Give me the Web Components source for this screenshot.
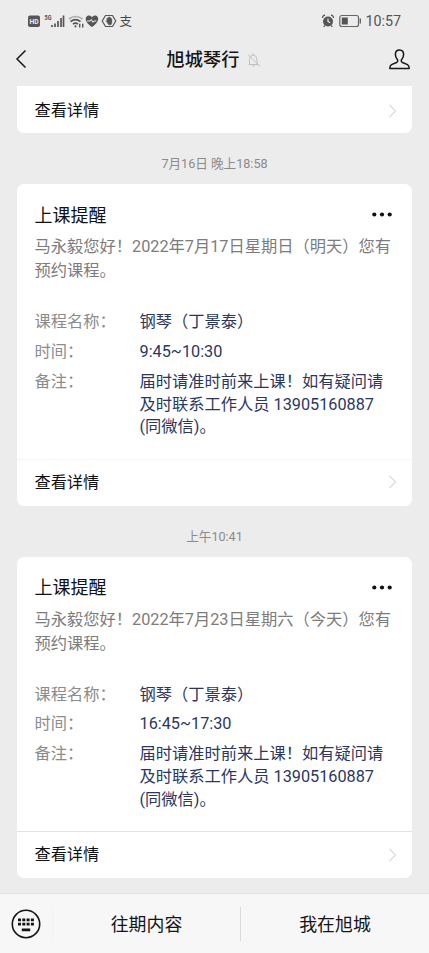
<!DOCTYPE html>
<html lang="zh-CN">
<head>
<meta charset="utf-8">
<title>旭城琴行</title>
<style>
html,body{margin:0;padding:0}
body{width:429px;height:953px;overflow:hidden;background:#ececec;font-family:Roboto,"Noto Sans CJK SC",sans-serif;text-spacing-trim:space-all}
</style>
</head>
<body>
<chat-screen></chat-screen>
<script>
const define=(name,html)=>{
  const t=document.createElement('template');
  t.innerHTML=html;
  customElements.define(name,class extends HTMLElement{
    constructor(){super();this.attachShadow({mode:'open'}).append(t.content.cloneNode(true));}
  });
};

define('status-bar',`
<style>
:host{display:flex;justify-content:space-between;align-items:center;height:41px;padding:0 28px 0 28px;box-sizing:border-box;color:#555}
svg{display:block}
.r{display:flex;align-items:center;font-size:14.3px;line-height:20px;color:#555;gap:4px}
.r span{margin-top:1px}
</style>
<svg width="106" height="20" viewBox="0 0 106 20" fill="none" stroke="#555">
  <rect x="0" y="4.500" width="12" height="11.500" rx="2" fill="#555" stroke="none"/>
  <text x="1.4" y="13.2" font-family="Roboto" font-size="8" font-weight="700" textLength="9.2" lengthAdjust="spacingAndGlyphs" fill="#ececec" stroke="none">HD</text>
  <text x="16.500" y="9" font-family="Roboto" font-size="7.400" font-weight="700" textLength="7" lengthAdjust="spacingAndGlyphs" fill="#555" stroke="none">5G</text>
  <path d="M24 14V16M27 12.500V16M30 10V16M33 7V16M35.5 4.500V16" stroke-width="1.7"/>
  <path d="M41 8q6.500-5 13.500 0" stroke="#aaa" stroke-width="1.600"/>
  <path d="M42.500 10.700q5-4 10 0M45 13.200q2.500-2 5 0" stroke-width="1.700"/>
  <circle cx="47.500" cy="15.300" r="1.100" fill="#555" stroke="none"/>
  <path d="M51.700 12.800v3.700M54.700 16.500v-3.700" stroke-width="1.400"/>
  <path d="M64 16c-9-6-6.500-11.500-3-11.500 1.700 0 2.600 1 3 2 .4-1 1.300-2 3-2 3.500 0 6 5.500-3 11.500z" fill="#555" stroke="none"/>
  <path d="M59 10h3.300l1-1.600 1.500 3 1-1.400h2.500" stroke="#ececec" stroke-width="1"/>
  <path d="M77.500 4.500h7l3.300 5.500-3.300 5.500h-7L74.200 10z" stroke-width="1.200" stroke-linejoin="round"/>
  <path d="M77.800 10.300l1 .6V7.500h1V6.500h1.100v-.6h1v.8h1v1h1v4q0 2.300-2.500 2.300-1.500 0-2.600-3.700z" fill="#555" stroke="#555" stroke-width=".4"/>
  <text x="91.500" y="15" font-family="Noto Sans CJK SC" font-size="12.500" fill="#444" stroke="none">支</text>
</svg>
<div class="r">
<svg width="40" height="18" viewBox="0 0 40 18" fill="none" stroke="#555">
  <circle cx="7" cy="9.500" r="5" fill="#555" stroke="none"/>
  <path d="M1.300 6Q1.600 3.500 4 3M10 3q2.400.5 2.700 3M3.800 13.500l-1.200 1.200M10.200 13.500l1.200 1.200" stroke-width="1.300"/>
  <path d="M7 6.500v3l2.200 1.300" stroke="#ececec" stroke-width="1.200"/>
  <rect x="18.800" y="3.500" width="18.700" height="11" rx="2" stroke="#666" stroke-width="1.200"/>
  <rect x="20.800" y="5.500" width="6" height="7" fill="#555" stroke="none"/>
  <path d="M39.300 6.500v5" stroke-width="1.200"/>
</svg>
<span>10:57</span>
</div>`);

define('nav-bar',`
<style>
:host{display:grid;grid-template-columns:60px 1fr 60px;align-items:center;height:45px;box-sizing:border-box;color:#151515}
.t{display:flex;align-items:center;justify-content:center;gap:8px;font-size:18.2px;font-weight:500;line-height:26px;height:36px;padding-right:1px}
svg{display:block}
.b{padding-left:15px}.p{padding-left:20px}
.b,.p,.t{margin-top:-8px}
.b{margin-top:-9px}
</style>
<div class="b"><svg width="12" height="20" viewBox="0 0 12 20" fill="none" stroke="#1a1a1a" stroke-width="1.500"><path d="M10.500 1.500L2 10l8.500 8.500"/></svg></div>
<div class="t"><slot></slot><svg width="14" height="16" viewBox="0 0 14 16" fill="none" stroke="#c0c0c0" stroke-width="1"><path d="M1.500 12.500h10M2.500 12.500V7.500q0-4 3.700-4.500Q10 3.500 10 7.500v5M6.200 1v2M5 14h2.500M1 2.500l12 12"/></svg></div>
<div class="p"><svg width="21" height="21" viewBox="0 0 21 21" fill="none" stroke="#151515" stroke-width="1.500" stroke-linejoin="round"><path d="M10.500 1C7.500 1 6.400 3 6.400 5.500c0 2.500 1 4 1.900 5 .8 1.200.6 2.300-.8 3L2.500 15.600Q.8 16.500.8 19.500h19.400q0-3-1.700-3.900l-5-2.100c-1.400-.7-1.600-1.800-.8-3 .9-1 1.900-2.500 1.900-5C14.600 3 13.500 1 10.500 1z"/></svg></div>`);

define('detail-link',`
<style>
:host{display:flex;align-items:center;justify-content:space-between;height:46px;padding:0 15.500px 0 17.500px;font-size:16.2px;line-height:24px;color:#111}
svg{display:block;margin-top:-1px}
</style>
<span>查看详情</span>
<svg width="9" height="14" viewBox="0 0 9 14" fill="none" stroke="#dcdcdc" stroke-width="1.200"><path d="M1.500 1l6 6-6 6"/></svg>`);

define('time-stamp',`
<style>:host{display:block;text-align:center;height:18px;line-height:18px;font-size:12.600px;color:#8b8b8b}</style>
<slot></slot>`);

define('info-row',`
<style>
:host{display:grid;grid-template-columns:105px 1fr;font-size:16.25px;line-height:22.75px;margin-bottom:7.200px}
.l{color:#8c8c8c}.v{color:#2b3761}
</style>
<div class="l"><slot name="label"></slot></div><div class="v"><slot></slot></div>`);

define('notice-card',`
<style>
:host{display:flex;flex-direction:column;height:321.500px;background:#fff;border-radius:7px}
.h{display:flex;align-items:center;justify-content:space-between;padding:18.500px 20px 0 17.500px;font-size:18px;line-height:26px;color:#111}
svg{display:block;margin-top:-2px}
.i{padding:6.500px 16px 0 17.500px;font-size:16.250px;line-height:24px;color:#7c7c7c}
.rows{flex:1;padding:28px 25px 0 17.500px}
detail-link{border-top:1px solid var(--rule,#f7f7f7)}
</style>
<div class="h"><span>上课提醒</span><svg width="20" height="5" viewBox="0 0 20 5" fill="#111"><circle cx="2.300" cy="2.500" r="2.100"/><circle cx="10" cy="2.500" r="2.100"/><circle cx="17.700" cy="2.500" r="2.100"/></svg></div>
<div class="i"><slot name="intro"></slot></div>
<div class="rows"><slot></slot></div>
<detail-link></detail-link>`);

define('menu-bar',`
<style>
:host{display:grid;grid-template-columns:52px 188px 1fr;align-items:center;height:60px;box-sizing:border-box;border-top:1px solid #e0e0e0;background:#f7f7f7;font-size:17.900px;color:#151515}
.k{padding-left:11px}svg{display:block}
.m{text-align:center;line-height:34px;border-left:1px solid var(--c,#f2f2f2)}
.m span{display:block;padding-top:1px;margin-bottom:-1px}
.last{--c:#dadada}
</style>
<div class="k"><svg width="30" height="30" viewBox="0 0 30 30" fill="#151515"><circle cx="15" cy="15" r="13.700" fill="none" stroke="#151515" stroke-width="1.600"/>
<path d="M7 9.500h3v2.700H7zM11.300 9.500h3v2.700h-3zM15.600 9.500h3v2.700h-3zM19.900 9.500h3v2.700h-3zM7 13.700h3v2.700H7zM11.300 13.700h3v2.700h-3zM15.600 13.700h3v2.700h-3zM19.900 13.700h3v2.700h-3zM10.800 19.500h8.400v2.700h-8.400z"/></svg></div>
<div class="m"><span>往期内容</span></div><div class="m last"><span>我在旭城</span></div>`);

define('chat-screen',`
<style>
:host{display:flex;flex-direction:column;height:953px;background:#ececec}
main{flex:1;display:flex;flex-direction:column;padding:0 17px}
.prev{background:#fff;border-radius:0 0 7px 7px;height:47px;box-sizing:border-box;padding-top:2px}
time-stamp{margin:22px 0 11px}
.two{--rule:#e2e2e2}
</style>
<status-bar></status-bar>
<nav-bar>旭城琴行</nav-bar>
<main>
<div class="prev"><detail-link></detail-link></div>
<time-stamp>7月16日 晚上18:58</time-stamp>
<notice-card>
<span slot="intro">马永毅您好！2022年7月17日星期日（明天）您有预约课程。</span>
<info-row><span slot="label">课程名称：</span>钢琴（丁景泰）</info-row>
<info-row><span slot="label">时间：</span>9:45~10:30</info-row>
<info-row><span slot="label">备注：</span>届时请准时前来上课！如有疑问请及时联系工作人员 13905160887 (同微信)。</info-row>
</notice-card>
<time-stamp>上午10:41</time-stamp>
<notice-card class="two">
<span slot="intro">马永毅您好！2022年7月23日星期六（今天）您有预约课程。</span>
<info-row><span slot="label">课程名称：</span>钢琴（丁景泰）</info-row>
<info-row><span slot="label">时间：</span>16:45~17:30</info-row>
<info-row><span slot="label">备注：</span>届时请准时前来上课！如有疑问请及时联系工作人员 13905160887 (同微信)。</info-row>
</notice-card>
</main>
<menu-bar></menu-bar>`);
</script>
</body>
</html>
